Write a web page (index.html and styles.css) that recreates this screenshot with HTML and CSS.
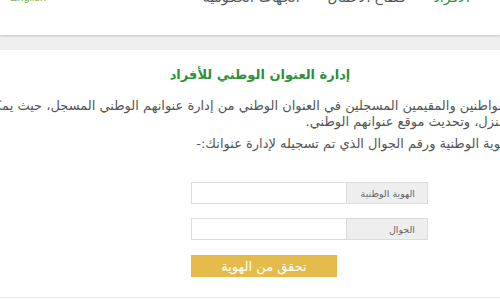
FILE: index.html
```html
<!DOCTYPE html>
<html lang="ar" dir="rtl">
<head>
<meta charset="utf-8">
<title>إدارة العنوان الوطني للأفراد</title>
<link rel="stylesheet" href="styles.css">
</head>
<body>
<header class="header">
  <nav class="nav">
    <a class="nav-item active">الأفراد</a>
    <a class="nav-item">قطاع الأعمال</a>
    <a class="nav-item">الجهات الحكومية</a>
    <a class="lang">English</a>
  </nav>
</header>
<div class="band"></div>
<main class="content">
  <h1 class="title">إدارة العنوان الوطني للأفراد</h1>
  <p class="intro">
    <span class="line">للمواطنين والمقيمين المسجلين في العنوان الوطني من إدارة عنوانهم الوطني المسجل، حيث يمكنهم الاستعلام عن تفاصيل عنوانهم الوطني</span>
    <span class="line">المنزل، وتحديث موقع عنوانهم الوطني.</span>
  </p>
  <p class="hint"><span class="line">الهوية الوطنية ورقم الجوال الذي تم تسجيله لإدارة عنوانك:-</span></p>
  <form class="form">
    <div class="group">
      <label class="addon">الهوية الوطنية</label>
      <input class="field" type="text">
    </div>
    <div class="group">
      <label class="addon">الجوال</label>
      <input class="field" type="text">
    </div>
    <button class="btn" type="button">تحقق من الهوية</button>
  </form>
</main>
<div class="footer-line"></div>
</body>
</html>
```
FILE: styles.css
```css
html, body {
  margin: 0;
  padding: 0;
  background: #fff;
  overflow: hidden;
  height: 300px;
}
body {
  font-family: "DejaVu Sans", sans-serif;
  color: #555;
}
.header {
  height: 35px;
  background: #fff;
  position: relative;
  box-shadow: 0 1px 2px rgba(0,0,0,0.18);
  overflow: hidden;
}
.nav {
  display: flex;
  align-items: flex-start;
  margin-top: -12px;
  padding-right: 30px;
  padding-left: 10px;
  gap: 28px;
}
.nav-item {
  font-size: 14px;
  color: #555;
  line-height: 18px;
}
.nav-item.active {
  color: #2f8f3c;
}
.lang {
  margin-right: auto;
  font-family: "Liberation Sans", sans-serif;
  font-size: 11px;
  color: #7cb65e;
  line-height: 12px;
  margin-top: 3px;
}
.band {
  height: 15px;
  background: #efefef;
}
.content {
  width: 508px;
  margin-right: -14px;
}
.title {
  margin: 13px 0 0;
  text-align: center;
  font-size: 13px;
  font-weight: bold;
  color: #2f8f3c;
  line-height: 24px;
}
.intro {
  margin: 11px 0 0;
  font-size: 13px;
  line-height: 16px;
}
.line {
  display: block;
  white-space: nowrap;
}
.hint {
  margin: 6px 0 0;
  font-size: 13px;
  line-height: 16px;
}
.form {
  margin-top: 30px;
  padding-right: 86px;
  display: flex;
  flex-direction: column;
  gap: 14px;
}
.group {
  display: flex;
  width: 237px;
  height: 22px;
  box-sizing: border-box;
  border: 1px solid #dcdcdc;
}
.addon {
  width: 81px;
  flex: none;
  background: #eeeeee;
  border-left: 1px solid #dcdcdc;
  font-size: 9.5px;
  white-space: nowrap;
  color: #666;
  display: flex;
  align-items: center;
  padding-right: 12px;
  box-sizing: border-box;
}
.field {
  flex: 1;
  min-width: 0;
  border: 0;
  margin: 0;
  padding: 0;
  background: #fff;
}
.btn {
  margin-top: 1px;
  margin-right: 91px;
  width: 146px;
  height: 22px;
  border: 0;
  background: #e5bc4b;
  color: #fff;
  font-family: "DejaVu Sans", sans-serif;
  font-size: 13px;
  padding: 0;
}
.footer-line {
  position: absolute;
  left: 0;
  right: 0;
  top: 297px;
  height: 1px;
  background: #ececec;
}
```
